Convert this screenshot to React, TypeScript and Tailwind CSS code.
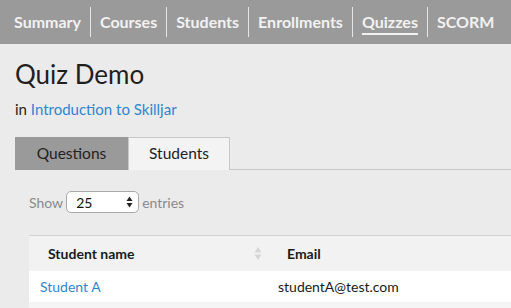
const navItems = ["Summary", "Courses", "Students", "Enrollments", "Quizzes", "SCORM"];

function SortIcon() {
  return (
    <svg width="8" height="15" viewBox="0 0 8 15" className="shrink-0" aria-hidden="true">
      <path d="M4 1 L7.5 6.5 L0.5 6.5 Z" fill="#d6d6d6" />
      <path d="M4 14 L7.5 8.5 L0.5 8.5 Z" fill="#d6d6d6" />
    </svg>
  );
}

export default function App() {
  return (
    <div className="h-[308px] w-[511px] overflow-hidden bg-[#ebebeb] font-['Lato',sans-serif]">
      {/* Top nav */}
      <nav className="flex h-[44px] items-center bg-[#9a9a9a] pl-[5px]">
        {navItems.map((item, i) => (
          <div key={item} className="flex items-center">
            {i > 0 && <span className="h-[30px] w-px bg-[#e6e6e6]" />}
            <span
              className={`px-[9px] text-[16px] font-bold text-[#f2f2f2] ${
                item === "Quizzes" ? "underline decoration-2 underline-offset-[5px]" : ""
              }`}
            >
              {item}
            </span>
          </div>
        ))}
      </nav>

      <div className="pl-[15px] pt-[15px]">
        <h1 className="text-[26px] leading-[30px] text-[#1f1f1f]">Quiz Demo</h1>
        <p className="mt-[11px] text-[15px] leading-[18px] text-[#222]">
          in <a className="text-[#2f86cf]">Introduction to Skilljar</a>
        </p>

        {/* Tabs */}
        <div className="mt-[19px] flex">
          <div className="flex h-[33px] w-[113px] items-center justify-center border border-[#9a9a9a] bg-[#9a9a9a] text-[15.5px] text-[#222]">
            Questions
          </div>
          <div className="flex h-[33px] w-[102px] items-center justify-center border border-b-0 border-[#c8c8c8] bg-[#f3f3f3] text-[15.5px] text-[#222]">
            Students
          </div>
          <div className="flex-1 border-b border-[#c8c8c8]" />
        </div>

        {/* Show entries */}
        <div className="mt-[21px] flex items-center pl-[14px] text-[14px] text-[#8a8a8a]">
          <span>Show</span>
          <div className="mx-[3px] flex h-[22px] w-[73px] items-center justify-between rounded-[5px] border border-[#a9a9a9] bg-white pl-[9px] pr-[5px] text-[14px] text-[#111]">
            <span>25</span>
            <svg width="7" height="12" viewBox="0 0 7 12" aria-hidden="true">
              <path d="M3.5 0.5 L6.5 5 L0.5 5 Z" fill="#222" />
              <path d="M3.5 11.5 L6.5 7 L0.5 7 Z" fill="#222" />
            </svg>
          </div>
          <span>entries</span>
        </div>

        {/* Table */}
        <div className="ml-[14px] mt-[22px] border-t border-[#d2d2d2]">
          <div className="flex h-[35px] items-center bg-[#f2f2f2] text-[14px] font-bold text-[#1a1a1a]">
            <div className="flex w-[249px] items-center justify-between pl-[19px] pr-[16px]">
              <span>Student name</span>
              <SortIcon />
            </div>
            <div className="pl-[9px]">Email</div>
          </div>
          <div className="flex h-[31px] items-center bg-white text-[14px]">
            <div className="w-[249px] pl-[11px] text-[#2f86cf]">Student A</div>
            <div className="text-[#1a1a1a]">studentA@test.com</div>
          </div>
          <div className="h-[10px] bg-[#f5f5f5]" />
        </div>
      </div>
    </div>
  );
}
